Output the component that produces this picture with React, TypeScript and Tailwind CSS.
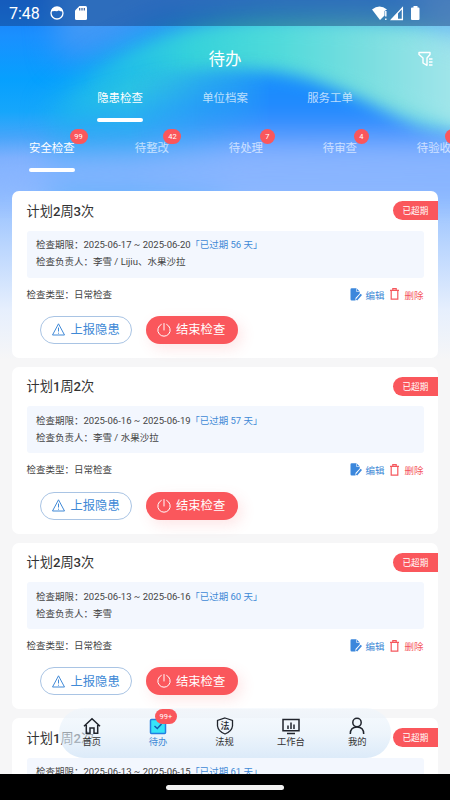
import { ReactNode } from "react";

const plans = [
  { first: "2", second: "3", range: "2025-06-17 ~ 2025-06-20", days: 56, owner: "李雪 / Lijiu、水果沙拉" },
  { first: "1", second: "2", range: "2025-06-16 ~ 2025-06-19", days: 57, owner: "李雪 / 水果沙拉" },
  { first: "2", second: "3", range: "2025-06-13 ~ 2025-06-16", days: 60, owner: "李雪" },
  { first: "1", second: "2", range: "2025-06-13 ~ 2025-06-15", days: 61, owner: "李雪" },
];

const subTabs = [
  { label: "安全检查", count: 99 },
  { label: "待整改", count: 42 },
  { label: "待处理", count: 7 },
  { label: "待审查", count: 4 },
  { label: "待验收", count: 12 },
];

const Backdrop = () => (
  <svg className="absolute top-0 left-0" width="450" height="360" viewBox="0 0 450 360">
    <defs>
      <linearGradient id="base" x1="0" y1="0" x2="0" y2="1">
        <stop offset="0" stopColor="#1a7cf5" />
        <stop offset="0.1" stopColor="#1a90ff" />
        <stop offset="0.22" stopColor="#06a0fe" />
        <stop offset="0.31" stopColor="#16a6fb" />
        <stop offset="0.38" stopColor="#46a5fa" />
        <stop offset="0.44" stopColor="#7aaffe" />
        <stop offset="0.53" stopColor="#90bdff" />
        <stop offset="0.68" stopColor="#b9d5fe" />
        <stop offset="0.86" stopColor="#e6effd" />
        <stop offset="1" stopColor="#f6f6f7" />
      </linearGradient>
      <linearGradient id="band" x1="0" y1="0" x2="1" y2="0">
        <stop offset="0" stopColor="#18b4ee" />
        <stop offset="0.25" stopColor="#36d2da" />
        <stop offset="0.45" stopColor="#4edada" />
        <stop offset="0.7" stopColor="#7cdee0" />
        <stop offset="0.9" stopColor="#a0e5ea" />
        <stop offset="1" stopColor="#a4e6ea" />
      </linearGradient>
      <linearGradient id="deep" gradientUnits="userSpaceOnUse" x1="0" y1="66" x2="0" y2="215">
        <stop offset="0" stopColor="#1690fb" />
        <stop offset="0.28" stopColor="#2089fe" />
        <stop offset="0.45" stopColor="#4c96fe" />
        <stop offset="0.62" stopColor="#76aaff" />
        <stop offset="0.8" stopColor="#8cb8ff" />
        <stop offset="1" stopColor="#96c0ff" stopOpacity="0" />
      </linearGradient>
      <filter id="soft" x="-30%" y="-30%" width="160%" height="160%" colorInterpolationFilters="sRGB">
        <feGaussianBlur stdDeviation="15" />
      </filter>
      <filter id="edge" x="-30%" y="-30%" width="160%" height="160%" colorInterpolationFilters="sRGB">
        <feGaussianBlur stdDeviation="8" />
      </filter>
      <filter id="wide" x="-30%" y="-60%" width="160%" height="220%" colorInterpolationFilters="sRGB">
        <feGaussianBlur stdDeviation="15" />
      </filter>
      {/* fades the deep wave out towards the left */}
      <linearGradient id="fade" gradientUnits="userSpaceOnUse" x1="130" y1="0" x2="270" y2="0">
        <stop offset="0" stopColor="white" stopOpacity="0" />
        <stop offset="0.5" stopColor="white" stopOpacity="0.55" />
        <stop offset="1" stopColor="white" />
      </linearGradient>
      <mask id="fadeLeft" maskUnits="userSpaceOnUse" x="0" y="0" width="450" height="360">
        <rect width="450" height="360" fill="url(#fade)" />
      </mask>
    </defs>
    <rect width="450" height="360" fill="url(#base)" />
    <path d="M50 -40H520V20H160L110 50L60 60Z" fill="#4299f6" filter="url(#soft)" />
    <path d="M50 115C80 80 120 50 170 34C230 12 340 6 540 30V140L400 130L240 112L60 128Z" fill="url(#band)" filter="url(#soft)" />
    <path d="M95 82C140 46 195 29 260 27C330 28 400 30 490 45V135C420 115 350 75 260 68C210 66 150 84 95 82Z" fill="url(#band)" filter="url(#edge)" />
    <path d="M50 130C90 110 170 84 230 92V200H50Z" fill="#2aa8f6" opacity="0.65" filter="url(#soft)" />
    <g mask="url(#fadeLeft)">
      <path d="M100 80C200 66 260 66 305 78C350 92 385 112 420 130C450 141 470 143 510 143V205H80Z" fill="url(#deep)" filter="url(#edge)" />
    </g>
    <path d="M-60 176L60 158L250 152L520 150V192H-60Z" fill="#8ab5ff" filter="url(#wide)" />
    <path d="M400 -20H500V50L440 35Z" fill="#86c4f6" opacity="0.7" filter="url(#soft)" />
  </svg>
);

const StatusBar = () => (
  <div className="relative flex h-[26px] items-center bg-[#102a66]/40 pl-[9px] text-white">
    <span className="w-[41px] pt-[2px] text-[16px] leading-none">7:48</span>
    <svg width="14" height="14" viewBox="0 0 14 14" fill="none">
      <circle cx="7" cy="7" r="6" stroke="white" strokeWidth="1.3" />
      <path d="M1.3 5.400C2 2 4.500 1 7 1s5 1 5.700 4.400L10.500 5.200 8.800 4.600 7 5.200 4.500 5Z" fill="white" />
    </svg>
    <svg className="ml-[11px]" width="12" height="14" viewBox="0 0 12 14">
      <path d="M4.500 0H10.500Q12 0 12 1.500V12.500Q12 14 10.500 14H1.500Q0 14 0 12.500V4.500Z" fill="white" />
      <path d="M4.700 2V4.500M7 2V4.500M9.300 2V4.500" stroke="#345d9d" strokeWidth="1.200" />
    </svg>
    <svg className="ml-[285px]" width="48" height="15" viewBox="0 0 48 15">
      <path d="M0 3.500Q7.500-2.500 15 3.500L12.500 5V9.500L8 14Z" fill="white" />
      <path d="M13.800 5V10.500M13.800 12.500V14" stroke="white" strokeWidth="1.400" />
      <path d="M30.400 1.800V13.500H19.500Z" fill="none" stroke="white" strokeWidth="1.300" />
      <path d="M26 6.500V13.500H19Z" fill="white" />
      <path d="M41.500 0H45.500V1.500H46.500Q47.500 1.500 47.500 2.500V13Q47.500 14 46.500 14H40Q39 14 39 13V2.500Q39 1.500 40 1.500H41.500Z" fill="white" />
    </svg>
  </div>
);

const Header = () => (
  <header className="relative h-[165px] text-white">
    <div className="flex h-[56px] items-center pt-[10px]">
      <h1 className="flex-1 pt-[2px] pl-[32px] text-center text-[16.500px] leading-[24px]">待办</h1>
      <svg className="mr-[17px]" width="15" height="16" viewBox="0 0 15 16" fill="none" stroke="white" strokeWidth="1.400">
        <path d="M1 1.500H12V3.500L9 7V14.300L5 12V7L1 3.500Z" strokeLinejoin="round" />
        <path d="M11 8H14.500M11 11H14.500M11 14H14.500" />
      </svg>
    </div>
    <div className="flex h-[40px] px-[67.500px] text-[11.400px]">
      {["隐患检查", "单位档案", "服务工单"].map((tab, i) => (
        <div key={tab} className={`flex flex-1 flex-col items-center pt-[8px] leading-[17px] ${i === 0 ? "" : "text-white/70"}`}>
          {tab}
          {i === 0 && <span className="mt-[11px] h-[4px] w-[46px] rounded-[2px] bg-white" />}
        </div>
      ))}
    </div>
    <div className="flex gap-[59.800px] overflow-hidden pt-[6px] pl-[29px] text-[11.400px]">
      {subTabs.map((tab, i) => (
        <div key={tab.label} className={`relative h-[50px] shrink-0 pt-[12px] leading-[17px] ${i === 0 ? "" : "text-white/65"}`}>
          {tab.label}
          {i === 0 && <span className="mt-[11px] block h-[4px] w-[46px] rounded-[2px] bg-white" />}
          <span className={`absolute top-[1px] h-[15px] rounded-full bg-[#fa575c] text-center text-[7.500px] leading-[15.500px] text-white ${tab.count > 9 ? "right-[-12.500px] w-[18px]" : "right-[-12px] w-[15px]"}`}>
            {tab.count}
          </span>
        </div>
      ))}
    </div>
  </header>
);

const PlanCard = ({ plan }: { plan: (typeof plans)[number] }) => (
  <section className="h-[166.800px] shrink-0 rounded-[7px] bg-white pt-[10px] pl-[14.500px]">
    <div className="flex h-[19px] items-center justify-between">
      <h2 className="pt-px text-[13.200px] leading-[19px] text-[#333]">
        计划<span className="font-medium">{plan.first}</span>周<span className="font-medium">{plan.second}</span>次
      </h2>
      <span className="h-[19px] w-[45.500px] rounded-l-full bg-[#fa575c] pl-[10px] text-[8.600px] leading-[20px] text-white">已超期</span>
    </div>
    <div className="mt-[10.500px] mr-[14.500px] h-[47px] rounded-[3px] bg-[#f3f7fe] pt-[5.500px] pl-[9.500px] text-[9.500px] leading-[17.200px] text-[#444]">
      <p>检查期限：{plan.range}<span className="-ml-[0.500px] text-[#4089d6]">「已过期 {plan.days} 天」</span></p>
      <p>检查负责人：{plan.owner}</p>
    </div>
    <div className="mt-[8px] mr-[14.500px] flex h-[17px] items-center text-[9.500px] leading-[17px]">
      <span className="flex-1 text-[#444]">检查类型：日常检查</span>
      <svg width="12" height="13" viewBox="0 0 12 13">
        <path d="M1.700 0.300H6.500L9.700 3.500V5.500L5.500 10V12.500H1.700Q0.500 12.500 0.500 11.300V1.500Q0.500 0.300 1.700 0.300Z" fill="#3b87dc" />
        <path d="M6.500 0.300V3.500H9.700" stroke="white" strokeWidth="0.600" fill="none" />
        <path d="M6.500 12L11.300 6.400" stroke="#3b87dc" strokeWidth="1.900" />
      </svg>
      <span className="ml-[3px] pt-[2px] text-[#4089d6]">编辑</span>
      <svg className="ml-[6px]" width="9" height="12" viewBox="0 0 9 12" fill="none" stroke="#f5575d" strokeWidth="1.200">
        <path d="M0 2.300H9M2.800 2V0.700H6.200V2M1.200 2.500V11.200H7.800V2.500" />
      </svg>
      <span className="ml-[5px] pt-[2px] text-[#f5575d]">删除</span>
    </div>
    <div className="mt-[13.300px] ml-[13.500px] flex gap-[14px] text-[12.300px]">
      <button className="flex h-[28px] w-[92px] items-center rounded-full border border-[#a9c4e4] pl-[10.500px] text-[#4089d6]">
        <svg width="13" height="13" viewBox="0 0 13 13" fill="none" stroke="currentColor" strokeWidth="1" strokeLinejoin="round">
          <path d="M6.500 0.800L12.500 12H0.500Z" />
          <path d="M6.500 4.500V8.500M6.500 9.700V10.700" />
        </svg>
        <span className="ml-[6px] pt-[1px]">上报隐患</span>
      </button>
      <button className="flex h-[28px] w-[92px] items-center rounded-full bg-[#fa575c] pl-[11px] text-white shadow-[4px_5px_14px_rgba(250,87,92,0.150)]">
        <svg width="14" height="14" viewBox="0 0 14 14" fill="none" stroke="currentColor" strokeWidth="1" strokeLinecap="round">
          <path d="M7 0.500V7M4.300 1.400A6.200 6.200 0 1 0 9.700 1.400" />
        </svg>
        <span className="ml-[5px] pt-[1px]">结束检查</span>
      </button>
    </div>
  </section>
);

const NavItem = ({ label, active, badge, children }: { label: string; active?: boolean; badge?: string; children: ReactNode }) => (
  <div className={`relative flex flex-1 flex-col items-center pt-[9px] text-[9.300px] ${active ? "text-[#4089d6]" : "text-[#333]"}`}>
    <svg width="18" height="18" viewBox="0 0 18 18" fill="none" stroke="#20242c" strokeWidth="1.500">
      {children}
    </svg>
    <span className="leading-[14px]">{label}</span>
    {badge && <span className="absolute top-[1px] left-[30px] h-[15px] w-[22px] rounded-full bg-[#fa575c] text-center text-[7.500px] leading-[15.500px] text-white">{badge}</span>}
  </div>
);

const BottomNav = () => (
  <nav className="absolute top-[708px] left-[58.500px] flex h-[50px] w-[332px] rounded-full bg-linear-to-b from-[#eff6fd]/55 via-[#e2eef9]/60 to-[#d6e7f8]/85">
    <NavItem label="首页">
      <path d="M1 9.300L9 1.700L17 9.300M3.300 8V16.300H7V11H11V16.300H14.700V8" />
    </NavItem>
    <NavItem label="待办" active badge="99+">
      <rect x="1.500" y="2.500" width="15" height="14" rx="1" fill="#37e4f8" stroke="#247fe0" />
      <path d="M5.500 9L8.300 11.500L12.500 7" stroke="#155cb0" />
    </NavItem>
    <NavItem label="法规">
      <path d="M9 1L16.500 3.500V9C16 13 13 15.500 9 17C5 15.500 2 13 1.500 9V3.500Z" strokeWidth="1.300" />
      <text x="9" y="12.300" textAnchor="middle" fontSize="9" fontWeight="500" fill="#20242c" stroke="none">法</text>
    </NavItem>
    <NavItem label="工作台">
      <path d="M1 2.500H17V13.800H1ZM5 16.500H13M6 8.500V12M9 5.500V12M12 7.500V12" />
    </NavItem>
    <NavItem label="我的">
      <circle cx="9" cy="5.500" r="4.200" />
      <path d="M2.300 17C2.300 12.500 5 10 9 10S15.700 12.500 15.700 17" />
    </NavItem>
  </nav>
);

const App = () => {
  return (
    <div className="relative h-[800px] w-[450px] overflow-hidden bg-[#f6f6f7] font-['Roboto','Noto_Sans_CJK_SC',sans-serif]">
      <Backdrop />
      <StatusBar />
      <Header />
      <main className="relative flex flex-col gap-[9px] px-[12px]">
        {plans.map((plan) => (
          <PlanCard key={plan.range} plan={plan} />
        ))}
      </main>
      <BottomNav />
      <div className="absolute inset-x-0 bottom-0 flex h-[26px] justify-center bg-black pt-[10.500px]">
        <div className="h-[5px] w-[118px] rounded-full bg-[#f2f2f2]" />
      </div>
    </div>
  );
};

export default App;
